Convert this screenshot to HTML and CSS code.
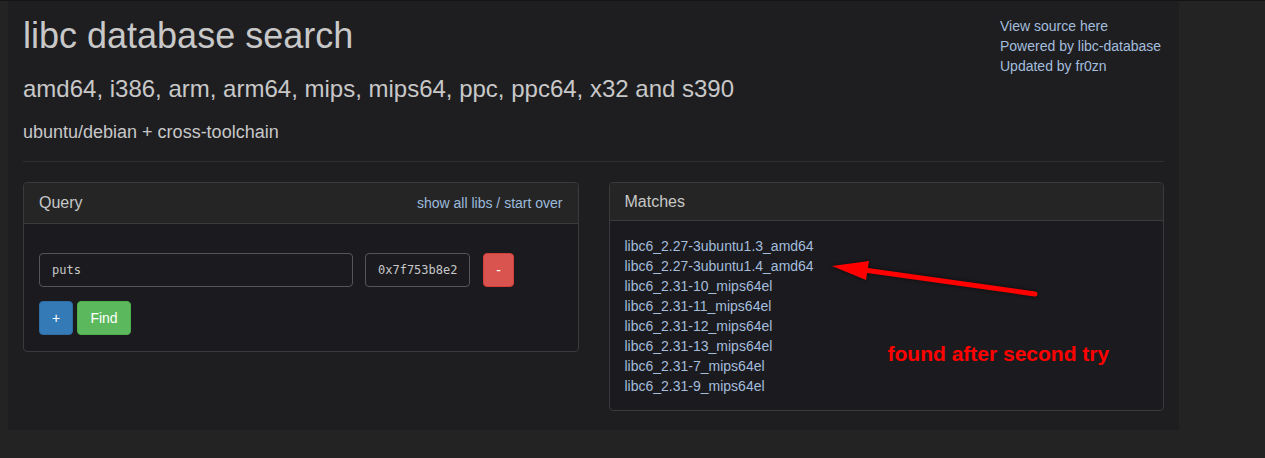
FILE: index.html
```html
<!DOCTYPE html>
<html>
<head>
<meta charset="utf-8">
<title>libc database search</title>
<link rel="stylesheet" href="styles.css">
</head>
<body>
<div class="container">
  <div class="header-row">
    <div class="header-main">
      <h1 class="title">libc database search</h1>
      <h3 class="subtitle">amd64, i386, arm, arm64, mips, mips64, ppc, ppc64, x32 and s390</h3>
      <h4 class="distro">ubuntu/debian + cross-toolchain</h4>
    </div>
    <div class="header-side">
      <a class="side-link" href="#">View source here</a>
      <a class="side-link" href="#">Powered by libc-database</a>
      <a class="side-link" href="#">Updated by fr0zn</a>
    </div>
  </div>
  <hr class="rule">
  <div class="panels">
    <div class="col">
      <div class="panel">
        <div class="panel-heading query-heading">
          <span class="panel-title">Query</span>
          <span class="heading-links"><a href="#">show all libs</a> / <a href="#">start over</a></span>
        </div>
        <div class="panel-body query-body">
          <div class="query-row">
            <input class="field field-name" type="text" value="puts">
            <input class="field field-addr" type="text" value="0x7f753b8e2aa0">
            <button class="btn btn-red">-</button>
          </div>
          <div class="button-row">
            <button class="btn btn-blue">+</button>
            <button class="btn btn-green">Find</button>
          </div>
        </div>
      </div>
    </div>
    <div class="col">
      <div class="panel matches-panel">
        <div class="panel-heading matches-heading">
          <span class="panel-title">Matches</span>
        </div>
        <div class="panel-body matches-body">
          <ul class="match-list">
            <li><a href="#">libc6_2.27-3ubuntu1.3_amd64</a></li>
            <li><a href="#">libc6_2.27-3ubuntu1.4_amd64</a></li>
            <li><a href="#">libc6_2.31-10_mips64el</a></li>
            <li><a href="#">libc6_2.31-11_mips64el</a></li>
            <li><a href="#">libc6_2.31-12_mips64el</a></li>
            <li><a href="#">libc6_2.31-13_mips64el</a></li>
            <li><a href="#">libc6_2.31-7_mips64el</a></li>
            <li><a href="#">libc6_2.31-9_mips64el</a></li>
          </ul>
        </div>
        <svg class="arrow" width="240" height="60" viewBox="0 0 240 60">
          <line x1="32" y1="15" x2="203" y2="39" stroke="#ff0000" stroke-width="5" stroke-linecap="round"/>
          <polygon points="0,11 37,6 34,25" fill="#ff0000"/>
        </svg>
        <div class="note">found after second try</div>
      </div>
    </div>
  </div>
</div>
</body>
</html>
```
FILE: styles.css
```css
html, body {
  margin: 0;
  padding: 0;
}
body {
  background: #232323;
  border-top: 1px solid #141414;
  font-family: "Liberation Sans", Arial, sans-serif;
  font-size: 14px;
  line-height: 20px;
  color: #c8c8c8;
  padding-left: 8px;
}
a {
  color: #9dbbdd;
  text-decoration: none;
}
.container {
  width: 1141px;
  padding: 15px 15px 19px;
  background: #1e1e21;
}
.header-row {
  display: flex;
}
.header-main {
  flex: 1;
}
.header-side {
  width: 164px;
  display: flex;
  flex-direction: column;
}
.side-link {
  color: #a3bddc;
}
.title {
  font-size: 36px;
  font-weight: normal;
  line-height: 40px;
  margin: 0 0 10px;
  color: #c8c8c8;
}
.subtitle {
  font-size: 24px;
  font-weight: normal;
  line-height: 26px;
  margin: 20px 0 0;
  color: #c8c8c8;
}
.distro {
  font-size: 18px;
  font-weight: normal;
  line-height: 20px;
  margin: 20px 0 0;
  color: #c8c8c8;
}
.rule {
  border: 0;
  border-top: 1px solid #2f2f31;
  margin: 19px 0 20px;
}
.panels {
  display: flex;
  gap: 30px;
  align-items: flex-start;
}
.col {
  flex: 1;
}
.panel {
  border: 1px solid #3a3a3c;
  border-radius: 4px;
  background: #1b1b1f;
}
.matches-panel {
  position: relative;
}
.panel-heading {
  background: #252525;
  border-bottom: 1px solid #3a3a3c;
  border-radius: 4px 4px 0 0;
  padding: 10px 15px;
  display: flex;
  justify-content: space-between;
  align-items: center;
}
.matches-heading {
  padding: 10px 15px 9px;
}
.panel-title {
  font-size: 16px;
  line-height: 18px;
  color: #c8c8c8;
}
.heading-links {
  color: #9dbbdd;
}
.panel-body {
  padding: 15px;
}
.query-body {
  padding: 29px 15px 16px;
}
.matches-body {
  padding: 15px 15px 14px;
}
.query-row {
  display: flex;
  align-items: center;
  margin-bottom: 14px;
}
.field {
  box-sizing: border-box;
  height: 34px;
  padding: 6px 12px;
  background: #1b1b1f;
  border: 1px solid #555558;
  border-radius: 4px;
  color: #c8c8c8;
  font-family: "DejaVu Sans Mono", "Liberation Mono", monospace;
  font-size: 12px;
  outline: none;
}
.field-name {
  width: 314px;
  margin-right: 12px;
}
.field-addr {
  width: 105px;
  margin-right: 13px;
}
.button-row {
  display: flex;
  gap: 4px;
}
.btn {
  box-sizing: border-box;
  height: 34px;
  padding: 6px 12px;
  border: 1px solid transparent;
  border-radius: 4px;
  font-family: "Liberation Sans", Arial, sans-serif;
  font-size: 14px;
  line-height: 20px;
  color: #ffffff;
}
.btn-red {
  width: 31px;
  padding: 6px 0;
  background: #d9534f;
  border-color: #d43f3a;
}
.btn-blue {
  width: 34px;
  padding: 6px 0;
  background: #337ab7;
  border-color: #2e6da4;
}
.btn-green {
  width: 54px;
  padding: 6px 0;
  background: #5cb85c;
  border-color: #4cae4c;
}
.match-list {
  list-style: none;
  margin: 0;
  padding: 0;
}
.match-list a {
  color: #a3bddc;
}
.arrow {
  position: absolute;
  left: 222px;
  top: 72px;
  filter: drop-shadow(0 0 2px rgba(0,0,0,0.6));
}
.note {
  position: absolute;
  left: 278px;
  top: 159px;
  font-family: "Liberation Sans", Arial, sans-serif;
  font-weight: bold;
  font-size: 21px;
  line-height: 24px;
  color: #ff0000;
}
```
